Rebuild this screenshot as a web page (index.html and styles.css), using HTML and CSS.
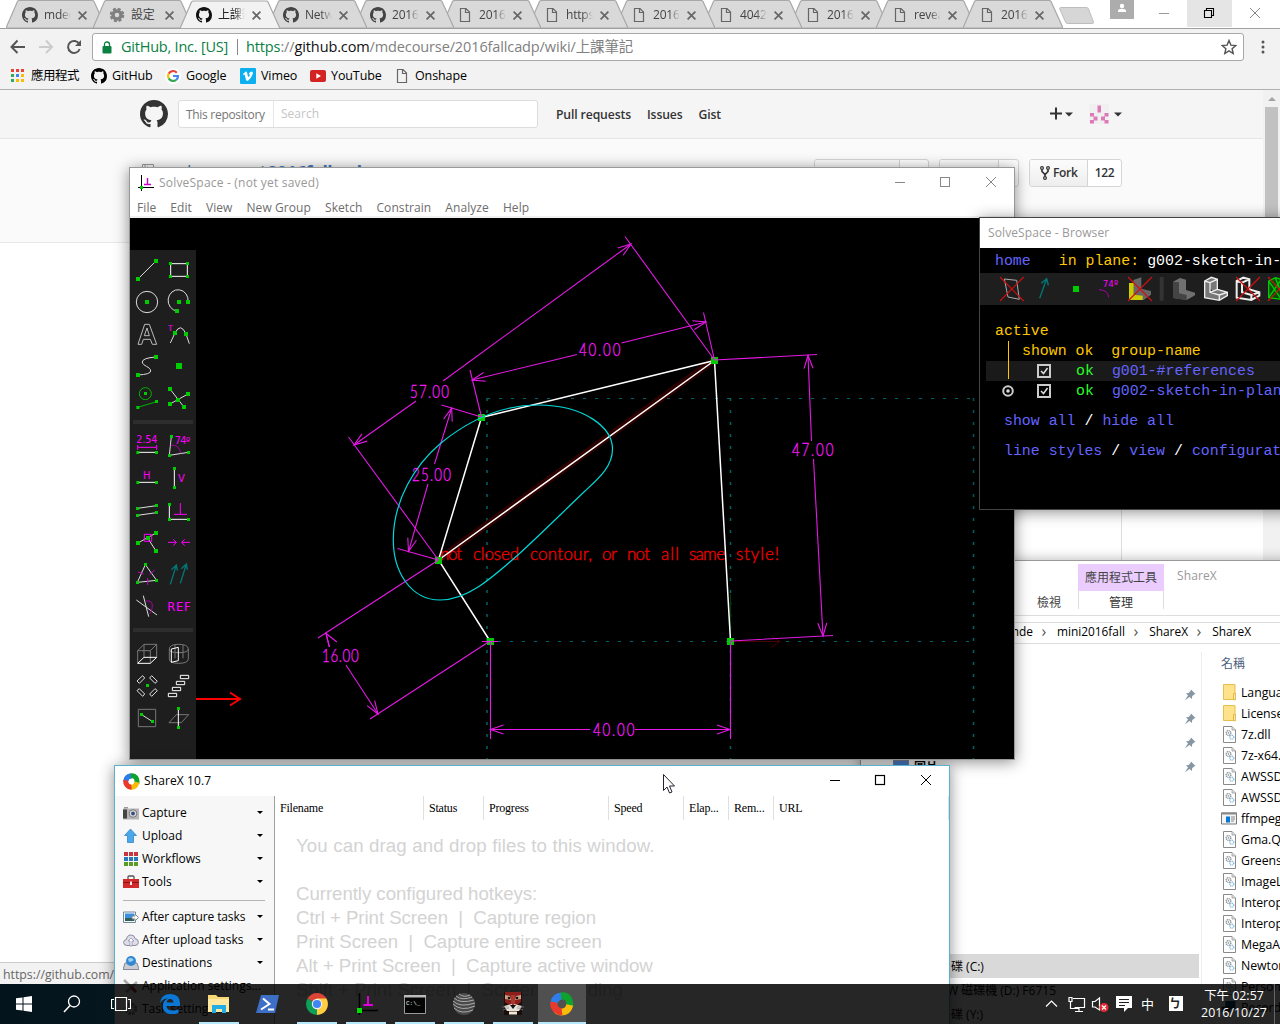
FILE: index.html
```html
<!DOCTYPE html>
<html lang="zh-Hant">
<head>
<meta charset="utf-8">
<title>Desktop</title>
<link rel="stylesheet" href="styles.css">
</head>
<body>
<svg class="defs" aria-hidden="true">
  <defs>
    <symbol id="gh" viewBox="0 0 16 16"><path fill="currentColor" d="M8 0C3.58 0 0 3.58 0 8c0 3.54 2.29 6.53 5.47 7.59.4.07.55-.17.55-.38 0-.19-.01-.82-.01-1.49-2.01.37-2.53-.49-2.69-.94-.09-.23-.48-.94-.82-1.13-.28-.15-.68-.52-.01-.53.63-.01 1.08.58 1.23.82.72 1.21 1.87.87 2.33.66.07-.52.28-.87.51-1.07-1.78-.2-3.64-.89-3.64-3.95 0-.87.31-1.59.82-2.15-.08-.2-.36-1.02.08-2.12 0 0 .67-.21 2.2.82.64-.18 1.32-.27 2-.27.68 0 1.36.09 2 .27 1.53-1.04 2.2-.82 2.2-.82.44 1.1.16 1.92.08 2.12.51.56.82 1.27.82 2.15 0 3.07-1.87 3.75-3.65 3.95.29.25.54.73.54 1.48 0 1.07-.01 1.93-.01 2.2 0 .21.15.46.55.38A8.013 8.013 0 0016 8c0-4.42-3.58-8-8-8z"/></symbol>
    <symbol id="page" viewBox="0 0 16 16"><path d="M3.5 1.5H9L12.5 5V14.5H3.5ZM8.5 1.5V5.5H12.5" fill="none" stroke="#666" stroke-width="1.2"/></symbol>
    <symbol id="gear" viewBox="0 0 16 16"><circle cx="8" cy="8" r="4" fill="none" stroke="#808080" stroke-width="3.4"/><circle cx="8" cy="8" r="6.1" fill="none" stroke="#808080" stroke-width="2.4" stroke-dasharray="2.9 1.89"/></symbol>
    <symbol id="tabshape" viewBox="0 0 100 28"><path d="M0 28 11.5 1.5Q12 .5 13.5 .5H86Q87.5 .5 88 1.5L100 28Z" fill="currentColor" stroke="#a8a8a8" stroke-width="1.2"/></symbol>
    <symbol id="x" viewBox="0 0 8 8"><path d="M.5.5 7.5 7.5M7.5.5.5 7.5" stroke="#666" stroke-width="1.5" fill="none"/></symbol>
    <symbol id="dll" viewBox="0 0 13 17"><path d="M.5.5H9L12.5 4V16.5H.5Z" fill="#fff" stroke="#8a8a8a"/><path d="M9 .5V4H12.5" fill="#ddd" stroke="#999" stroke-width=".8"/><circle cx="5.5" cy="7" r="2.4" fill="none" stroke="#8d9499" stroke-width="1.3" stroke-dasharray="1.2 .5"/><circle cx="5.5" cy="7" r=".9" fill="#9aa"/><circle cx="8.8" cy="11.2" r="2" fill="none" stroke="#8ebedb" stroke-width="1.3" stroke-dasharray="1.2 .5"/></symbol>
    <symbol id="folder" viewBox="0 0 13 17"><path d="M.5 .5H12V15.5H.5Z" fill="#ffe28c" stroke="#e8bf4a"/><path d="M10.5 9.5H12.6V15.8H10.5Z" fill="#ffe9a8" stroke="#dcae35" stroke-width=".8"/></symbol>
    <symbol id="pin" viewBox="0 0 12 12"><path d="M7 .5 11.5 5 10 5.6 8.2 7.3 7.8 10 5.6 8 .8 11.3 4 6.4 2 4.3 4.7 3.9 6.5 2Z" fill="#8796a2"/></symbol>
    <symbol id="sharex" viewBox="0 0 24 24"><g fill="none" stroke-width="7"><path d="M4 12A8 8 0 0 1 12 4.2" stroke="#2f7de8"/><path d="M10 4.500Q15 2.500 18.2 6.500 20.500 10.500 19.500 15" stroke="#0da32d"/><path d="M19.800 13Q18 20 12 20 8 20 6.500 18" stroke="#fbbc05"/><path d="M4 10Q3 15 7 18.200 9.500 20 12 19.700" stroke="#ea3a2c"/><path d="M4.200 10Q5.500 4.500 11 4.200" stroke="#2f7de8"/></g></symbol>
    <marker id="arr" markerUnits="userSpaceOnUse" markerWidth="30" markerHeight="12" refX="0" refY="0" viewBox="-15 -6 30 12" orient="auto-start-reverse"><path d="M-13-4.5 0 0-13 4.5" fill="none" stroke="#e619e6" stroke-width="1.1"/></marker>
  </defs>
</svg>

<main class="desktop">

<section class="chrome">
  <div class="tabstrip">
    <ul class="tabs">
      <li class="tab"><svg class="shape"><use href="#tabshape"/></svg><svg class="fav ghd"><use href="#gh"/></svg><span>mdec</span><svg class="close"><use href="#x"/></svg></li>
      <li class="tab"><svg class="shape"><use href="#tabshape"/></svg><svg class="fav"><use href="#gear"/></svg><span>設定</span><svg class="close"><use href="#x"/></svg></li>
      <li class="tab active"><svg class="shape"><use href="#tabshape"/></svg><svg class="fav"><use href="#gh"/></svg><span>上課筆</span><svg class="close"><use href="#x"/></svg></li>
      <li class="tab"><svg class="shape"><use href="#tabshape"/></svg><svg class="fav ghd"><use href="#gh"/></svg><span>Netw</span><svg class="close"><use href="#x"/></svg></li>
      <li class="tab"><svg class="shape"><use href="#tabshape"/></svg><svg class="fav ghd"><use href="#gh"/></svg><span>2016</span><svg class="close"><use href="#x"/></svg></li>
      <li class="tab"><svg class="shape"><use href="#tabshape"/></svg><svg class="fav"><use href="#page"/></svg><span>2016</span><svg class="close"><use href="#x"/></svg></li>
      <li class="tab"><svg class="shape"><use href="#tabshape"/></svg><svg class="fav"><use href="#page"/></svg><span>https</span><svg class="close"><use href="#x"/></svg></li>
      <li class="tab"><svg class="shape"><use href="#tabshape"/></svg><svg class="fav"><use href="#page"/></svg><span>2016</span><svg class="close"><use href="#x"/></svg></li>
      <li class="tab"><svg class="shape"><use href="#tabshape"/></svg><svg class="fav"><use href="#page"/></svg><span>4042</span><svg class="close"><use href="#x"/></svg></li>
      <li class="tab"><svg class="shape"><use href="#tabshape"/></svg><svg class="fav"><use href="#page"/></svg><span>2016</span><svg class="close"><use href="#x"/></svg></li>
      <li class="tab"><svg class="shape"><use href="#tabshape"/></svg><svg class="fav"><use href="#page"/></svg><span>revea</span><svg class="close"><use href="#x"/></svg></li>
      <li class="tab"><svg class="shape"><use href="#tabshape"/></svg><svg class="fav"><use href="#page"/></svg><span>2016</span><svg class="close"><use href="#x"/></svg></li>
    </ul>
    <svg class="newtab" width="36" height="18"><path d="M1.500 .5H27.5Q29 .5 29.500 2L34.500 15Q34.800 16.500 33.500 16.500H8.500Q7 16.500 6.500 15L.8 2Q.5 .5 1.500 .5Z" fill="#d6d6d6" stroke="#bdbdbd"/></svg>
    <svg class="caption" width="170" height="28"><rect x="0" y="0" width="24" height="19" fill="#acacac"/><circle cx="12" cy="6" r="2.200" fill="#fff"/><path d="M8 12V11Q8 8.700 12 8.700 16 8.700 16 11V12Z" fill="#fff"/><path d="M49 13.500H59" stroke="#999"/><rect x="77" width="45" height="27" fill="#e5e5e5"/><path d="M94.500 10.500H101.500V17.500H94.500ZM96.500 10.500V8.500H103.500V15.500H101.500" fill="none" stroke="#000" stroke-width="1.100"/><path d="M140 8 150 18M150 8 140 18" stroke="#888"/></svg>
  </div>
  <div class="toolbar">
    <svg class="nav" width="84" height="33"><path d="M11.500 18H25M17.500 11.500 11.500 18 17.500 24" fill="none" stroke="#555" stroke-width="2"/><path d="M39 18H52.500M46 11.500 52 18 46 24" fill="none" stroke="#ccc" stroke-width="2"/><path d="M79.300 15A6 6 0 1 0 79.700 20" fill="none" stroke="#555" stroke-width="2"/><path d="M81 11V17H75Z" fill="#555"/></svg>
    <div class="omnibox">
      <svg width="10" height="13"><rect x=".5" y="5" width="9" height="7.500" rx="1" fill="#0b8043"/><path d="M2.500 6V3.500Q2.500 1 5 1 7.500 1 7.500 3.500V6" fill="none" stroke="#0b8043" stroke-width="1.300"/></svg>
      <span class="org">GitHub, Inc. [US]</span><i></i>
      <span class="url"><b>https</b>://<em>github.com</em>/mdecourse/2016fallcadp/wiki/上課筆記</span>
      <svg class="star" width="16" height="16"><path d="M8 1.500 9.900 6.100 14.800 6.500 11.100 9.700 12.200 14.500 8 11.900 3.800 14.500 4.900 9.700 1.200 6.500 6.100 6.100Z" fill="none" stroke="#555" stroke-width="1.400"/></svg>
    </div>
    <svg class="dots" width="4" height="14"><g fill="#555"><circle cx="2" cy="2" r="1.500"/><circle cx="2" cy="7" r="1.500"/><circle cx="2" cy="12" r="1.500"/></g></svg>
  </div>
  <div class="bookmarks">
    <a class="b1"><svg width="14" height="14"><g fill="#ea4335"><path d="M0 0h3v3H0zM5 0h3v3H5zM10 0h3v3h-3z"/></g><g fill="#34a853"><path d="M0 5h3v3H0zM0 10h3v3H0z"/></g><path d="M5 5h3v3H5z" fill="#4285f4"/><path d="M10 5h3v3h-3zM5 10h3v3H5zM10 10h3v3h-3z" fill="#fbbc05"/></svg>應用程式</a>
    <a class="b2"><svg width="16" height="16"><use href="#gh"/></svg>GitHub</a>
    <a class="b3"><svg width="16" height="16"><circle cx="8" cy="8" r="8" fill="#fff"/><g fill="none" stroke-width="2.200"><path d="M11.800 4.700A5 5 0 0 0 3.700 5.600" stroke="#ea4335"/><path d="M3.700 5.600A5 5 0 0 0 3.700 10.400" stroke="#fbbc05"/><path d="M3.700 10.400A5 5 0 0 0 11.200 11.800" stroke="#34a853"/><path d="M8 8H13Q13 10.500 11.200 11.800" stroke="#4285f4"/></g></svg>Google</a>
    <a class="b4"><svg width="16" height="16"><rect width="16" height="16" rx="1" fill="#0cb0f0"/><path d="M3 6 5.800 3.500Q7 3.200 7.300 5.500 7.800 9 8.500 9 9.200 8.800 9.800 7 9.900 6 8.700 6.300 9.500 3.300 11.800 3.400 13.300 3.600 12.800 5.800 11.500 10 8 12.800 6.500 13.300 5.900 11.500L4.500 6.500 3.600 6.900Z" fill="#fff"/></svg>Vimeo</a>
    <a class="b5"><svg width="16" height="12"><rect width="16" height="12" rx="2" fill="#d32323"/><path d="M6.300 3.300V8.700L11 6Z" fill="#fff"/></svg>YouTube</a>
    <a class="b6"><svg width="16" height="16"><use href="#page"/></svg>Onshape</a>
  </div>
  <div class="viewport">
    <div class="page">
      <header class="ghhead">
        <svg class="mark" width="28" height="28"><use href="#gh"/></svg>
        <div class="search"><span>This repository</span><p>Search</p></div>
        <nav><a>Pull requests</a><a>Issues</a><a>Gist</a></nav>
        <svg class="user" width="76" height="24"><path d="M1 11.500H13M7 5.500V17.500" stroke="#333" stroke-width="2"/><path d="M16 10.500H24L20 14.500ZM65 10.500H73L69 14.500Z" fill="#333"/><rect x="40" y="2" width="20" height="20" fill="#f0f0f0"/><path d="M48.500 3.500h3.500v7h-3.500zM41 11h4v3.500h-4zM44.500 14.500h4v4h-4zM41 18h4v3.500h-4zM55.500 11h4v3.500h-4zM52 14.500h4v4h-4zM55.500 18h4v3.500h-4z" fill="#de79b8"/></svg>
      </header>
      <div class="repohead">
        <svg class="book" width="12" height="16"><path d="M.5.500H11.500V15H.5ZM3 .5V12M5 3H6M5 6H6" fill="none" stroke="#999"/></svg>
        <h1>mdecourse / <b>2016fallcadp</b></h1>
        <div class="btns">
          <div class="btn watch"><span>◉ Watch</span><b>8</b></div>
          <div class="btn starb"><span>★ Star</span><b>5</b></div>
          <div class="btn fork"><span><svg width="10" height="16"><g fill="none" stroke="#333" stroke-width="1.200"><circle cx="2" cy="3" r="1.400"/><circle cx="8" cy="3" r="1.400"/><circle cx="5" cy="13" r="1.400"/></g><path d="M2 4.500V6.500L5 9.500 8 6.500V4.500M5 9V11.500" fill="none" stroke="#333" stroke-width="1.700"/></svg>Fork</span><b>122</b></div>
        </div>
      </div>
      <div class="wiki"></div>
    </div>
    <div class="scroll"><i></i><b></b></div>
  </div>
  <div class="status">https://github.com/</div>
</section>

<section class="explorer">
  <div class="extitle"><span class="view">檢視</span><div class="ctx"><span>應用程式工具</span><p>管理</p></div><span class="exname">ShareX</span></div>
  <div class="crumbs"><span>mde</span><i>›</i><span>mini2016fall</span><i>›</i><span>ShareX</span><i>›</i><span>ShareX</span></div>
  <div class="exbody">
    <div class="tree">
      <div class="pins"><svg><use href="#pin"/></svg><svg><use href="#pin"/></svg><svg><use href="#pin"/></svg><svg><use href="#pin"/></svg></div>
      <div class="pics"><svg width="16" height="16"><rect x=".5" y=".5" width="15" height="13" fill="#4d86d8" stroke="#889"/></svg>圖片</div>
      <div class="drive sel">碟 (C:)</div>
      <div class="drive d2">W 磁碟機 (D:) F6715</div>
      <div class="drive">碟 (Y:)</div>
    </div>
    <div class="files">
      <h2>名稱</h2>
      <p><svg><use href="#folder"/></svg>Languages</p>
      <p><svg><use href="#folder"/></svg>Licenses</p>
      <p><svg><use href="#dll"/></svg>7z.dll</p>
      <p><svg><use href="#dll"/></svg>7z-x64.dll</p>
      <p><svg><use href="#dll"/></svg>AWSSDK</p>
      <p><svg><use href="#dll"/></svg>AWSSDK</p>
      <p class="app"><svg viewBox="0 0 16 12"><path d="M.5.5H15.500V11.500H.5Z" fill="#f4f4f4" stroke="#777"/><path d="M0 0H16V2H0Z" fill="#888"/><path d="M5 4H9V10H5Z" fill="#0078d7"/><path d="M10 4.500H14M10 6.500H14M10 8.500H13" stroke="#888"/></svg>ffmpeg</p>
      <p><svg><use href="#dll"/></svg>Gma.QrCode</p>
      <p><svg><use href="#dll"/></svg>Greenshot</p>
      <p><svg><use href="#dll"/></svg>ImageListView</p>
      <p><svg><use href="#dll"/></svg>Interop.</p>
      <p><svg><use href="#dll"/></svg>Interop.</p>
      <p><svg><use href="#dll"/></svg>MegaApi</p>
      <p><svg><use href="#dll"/></svg>Newtonsoft</p>
      <p><svg><use href="#dll"/></svg>Personal</p>
      <p class="app"><svg viewBox="0 0 16 14"><path d="M4 0H15V9H4Z" fill="#0a4a7a"/><path d="M0 6H9V12H0Z" fill="#2b3a44"/></svg><span>Recorder</span></p>
    </div>
  </div>
</section>

<section class="win solve">
  <div class="title"><svg width="17" height="17"><path d="M3.500 0V16M0 12.500H16" stroke="#000"/><path d="M9.500 3V9.500M6 9.500H13" stroke="#c0c" stroke-width="1.400"/><rect x="2" y="11" width="3" height="3" fill="#0c0"/></svg><span>SolveSpace - (not yet saved)</span>
    <svg class="wc" width="110" height="14"><path d="M1 6.500H11M92 1 102 11M102 1 92 11" stroke="#888"/><rect x="46.500" y="1.500" width="9" height="9" fill="none" stroke="#888"/></svg></div>
  <div class="menu"><span>File</span><span>Edit</span><span>View</span><span>New Group</span><span>Sketch</span><span>Constrain</span><span>Analyze</span><span>Help</span></div>
  <svg class="cad" viewBox="130 218 884 541">
    <rect x="130" y="218" width="884" height="541" fill="#000"/>
    <g fill="none" stroke="#006464" stroke-dasharray="3 9" stroke-width="1.200"><path d="M487 398.500H974M498 641.500H974"/><path d="M487 398V759M730.500 398V759M973.500 398V759" stroke-width="1.500"/></g>
    <path d="M438 560 714 360" stroke="#2e0000" stroke-width="7"/>
    <path d="M730.500 594V641" stroke="#003c00"/><path d="M731 641.500H780M771 635.500 780 641.500 771 647.500" stroke="#4b0000" fill="none"/>
    <g class="warn">
      <text y="559.500"><tspan x="440" textLength="22">not</tspan><tspan x="473" textLength="46">closed</tspan><tspan x="530" textLength="62">contour,</tspan><tspan x="602" textLength="15">or</tspan><tspan x="627" textLength="23">not</tspan><tspan x="661" textLength="18">all</tspan><tspan x="689" textLength="36">same</tspan><tspan x="736" textLength="43">style!</tspan></text>
    </g>
    <g stroke="#fff" stroke-width="1.500" fill="none"><path d="M490 641 438.500 560 481.500 417.500 714.500 360.500 730.500 641M438.500 560 714.500 360.500"/></g>
    <g fill="#0c0"><path d="M487 638h7v7h-7zM435 557h7v7h-7zM478 414h7v7h-7zM711 357h7v7h-7zM727 638h7v7h-7z"/></g>
    <g stroke="#e619e6" stroke-width="1.100" fill="none">
      <path d="M714.500 360 625 236.500M438.500 560 348.500 437M714.500 360 703.500 312.500M481.500 417 470 370M481.500 417 441.500 405M438.500 560 397.500 548.500M438.500 560 318 638M490 641 370 719M490.500 641V739M730.500 641V739M482 641.500H498M714.500 360 817 354.500M730.500 641 833 635.500"/>
      <g marker-end="url(#arr)">
        <path d="M443 381 631 244"/><path d="M416 401 354 445"/>
        <path d="M621.500 343 706 322"/><path d="M577 354.500 472 380"/>
        <path d="M434.500 464 451.700 408"/><path d="M428 484 408.500 551.500"/>
        <path d="M329.500 647 326 633.500" marker-end="none"/><path d="M336 649 326 633.500" stroke="none"/><path d="M346 665 378 714"/>
        <path d="M590 729.500H490.500"/><path d="M635 729.500H730"/>
        <path d="M811.500 441 808 355.500"/><path d="M813.500 459 823 636"/>
      </g>
    </g>
    <path d="M538 405C585 405 612.500 428 612.500 449 612.500 467 598 479 585 491 562 513 542 533 519 554 493 577 468 600 440 600 411 600 393.300 572 393.300 540 393.300 500 415 465 441 443 468 421 500 405 538 405Z" fill="none" stroke="#00d8d8" stroke-width="1.200"/>
    <g class="dims">
      <text transform="translate(579 355.500) scale(.78 1)" textLength="53">40.00</text>
      <text transform="translate(410 398) scale(.78 1)" textLength="50">57.00</text>
      <text transform="translate(412 481) scale(.78 1)" textLength="50">25.00</text>
      <text transform="translate(322 662) scale(.78 1)" textLength="47">16.00</text>
      <text transform="translate(593 736) scale(.78 1)" textLength="53">40.00</text>
      <text transform="translate(792 456) scale(.78 1)" textLength="53">47.00</text>
    </g>
    <rect x="130" y="250" width="66" height="509" fill="#1e1e1e"/>
    <path d="M196 699H239M230 692.500 240 699 230 705.500" fill="none" stroke="red" stroke-width="2"/>
    <g transform="translate(125 240) scale(.33333)" fill="none" stroke="#ddd" stroke-width="3">
      <path d="M39 117 93 63"/><path d="M137 71H187V109H137Z" stroke="#fff"/><circle cx="66" cy="186" r="32"/><path d="M189 186A30 32 0 1 0 156 213"/>
      <path d="M39 313 59 253H73L95 313H82L76 298H55L50 313ZM58 287H73L66 264Z" stroke="#bbb" stroke-width="3"/><path d="M136 309 150 279Q167 246 183 282L193 311"/>
      <path d="M39 405Q77 403 77 393C77 380 52 378 52 366Q52 354 93 351"/><path d="M135 447 177 501M135 492 189 462"/>
      <g stroke="#00b400"><circle cx="61" cy="461" r="18"/><path d="M38 502 95 485"/></g>
      <path d="M37 637H95M37 727H95M148 685V743" stroke="#fff"/><path d="M139 589 133 646 190 637"/>
      <g stroke="#f0f"><path d="M38 615V630M95 615V630M38 622H95"/><path d="M137 616Q163 612 167 640" stroke="#a0a"/></g>
      <g fill="#f0f" stroke="none" font-family="DejaVu Sans" font-size="29"><text x="34" y="609" textLength="63">2.54</text><text x="149" y="611" textLength="47">74º</text><text x="54" y="718" font-size="30">H</text><text x="159" y="725" font-size="30">V</text><text x="129" y="272" font-size="24">T</text></g>
      <path d="M24 546H204" stroke="#2d2d2d" stroke-width="12"/>
      <g fill="#0c0" stroke="none"><path d="M33 111h12v12H33zM87 57h12v12H87zM132 66h9v9h-9zM183 66h9v9h-9zM132 105h9v9h-9zM183 105h9v9h-9zM60 180h12v12H60zM156 180h12v12h-12zM183 180h12v12h-12zM150 207h12v12h-12zM144 273h12v12h-12zM177 276h12v12h-12zM33 399h12v12H33zM87 345h12v12H87zM153 369h18v18h-18zM57 456h9v9h-9zM34 498h9v9h-9zM90 480h9v9h-9zM129 441h12v12h-12zM183 456h12v12h-12zM129 486h12v12h-12zM171 495h12v12h-12zM153 474h12v12h-12zM34 633h9v9h-9zM90 633h9v9h-9zM135 585h9v9h-9zM129 642h9v9h-9zM186 633h9v9h-9zM34 723h9v9h-9zM90 723h9v9h-9zM144 681h9v9h-9zM144 738h9v9h-9z"/></g>
    </g>
    <g transform="translate(125 490) scale(.33333)" fill="none" stroke="#ddd" stroke-width="3">
      <path d="M37 55 95 47M37 76 95 68"/><path d="M133 43V88H190" stroke="#fff"/><path d="M166 39V73M147 73H186" stroke="#f0f"/>
      <path d="M39 159 93 129M68 144 93 183"/><path d="M58 133H80V154H58Z" stroke="#f0f"/>
      <path d="M129 157H154M145 148 154 157 145 167M195 157H170M179 148 170 157 179 167" stroke="#f0f"/>
      <path d="M61 224 37 277 95 271Z"/><path d="M39 246 56 252M74 254 89 240M68 264V285" stroke="#c0c"/>
      <path d="M136 283 154 225M139 239 154 225 157 242M166 280 184 222M169 236 184 222 187 239" stroke="#007878" stroke-width="4"/>
      <path d="M34 330 96 375M55 317 71 380"/><path d="M62 333Q83 330 82 349T74 371" stroke="#a0a"/>
      <text x="127" y="362" font-family="DejaVu Sans" font-size="35" fill="#f0f" stroke="none" textLength="70">REF</text>
      <path d="M24 420H204" stroke="#2d2d2d" stroke-width="12"/>
      <g stroke="#777"><path d="M38 482 57 463H95V502M38 482H76V520M76 482 95 463M57 463V502M38 482V520"/><path d="M133 477V507Q133 520 161 520T190 507V477M133 477Q133 463 161 463T190 477Q190 488 161 488T133 477M150 463V505M174 465V505"/></g>
      <path d="M38 520H76L95 502H57ZM139 477V517L160 512V472Z" stroke="#fff"/>
      <path d="M36 573 53 557 59 564 43 580ZM74 564 80 557 97 574 90 580ZM36 602 43 596 59 612 53 619ZM74 612 90 596 97 602 80 619Z"/>
      <path d="M166 556H191V566H166ZM154 574H179V584H154ZM142 592H167V602H142ZM130 610H155V620H130Z" stroke="#fff"/>
      <path d="M40 658H92V710H40ZM132 698 154 674H191L169 698Z" stroke="#777"/><path d="M50 674 83 695"/><path d="M160 655V712" stroke="#fff"/>
      <g fill="#0c0" stroke="none"><path d="M33 51h9v9h-9zM90 42h9v9h-9zM33 72h9v9h-9zM90 63h9v9h-9zM129 39h9v9h-9zM129 84h9v9h-9zM186 84h9v9h-9zM33 153h12v12H33zM87 123h12v12H87zM63 138h12v12H63zM87 177h12v12H87zM57 219h9v9h-9zM33 273h9v9h-9zM90 267h9v9h-9zM63 582h9v9h-9zM45 669h9v9h-9zM78 690h9v9h-9zM156 651h9v9h-9zM156 708h9v9h-9z"/></g>
    </g>
  </svg>
</section>

<section class="win browser">
  <div class="btitle">SolveSpace - Browser</div>
  <div class="mono">
    <div class="brow home"><a>home</a><em>in plane:</em><b>g002-sketch-in-plane</b></div>
    <svg class="bicons" viewBox="30 189 900 96" width="300" height="32"><g fill="none" stroke-width="3">
      <path d="M103 207 140 211 148 268 114 261Z" stroke="#aaa"/>
      <path d="M209 265 230 206M214 220 230 206 235 226" stroke="#007878" stroke-width="4"/><path d="M309 228H327V246H309Z" fill="#0c0"/><path d="M387 239Q415 240 416 262" stroke="#a0a"/>
      <path d="M490 210 514 202V236L543 243V254L521 270 490 265Z" fill="#666"/><path d="M477 219H491V254L518 257V270H477Z" fill="#cc0"/>
      <path d="M575 201V272" stroke="#333" stroke-width="12"/>
      <path d="M609 215 630 204 648 209V240L675 248V256L650 270 609 264Z" fill="#707070"/><path d="M609 215 627 217V250L650 255V270L609 264Z" fill="#444"/>
      <g fill="#777" stroke="#eee" stroke-width="4"><path d="M704 213 724 202 742 208V238L772 247V257L748 271 704 263ZM704 213 720 218V247L748 255V271M720 218 742 208M748 255 772 247M720 247 742 238"/><path fill="none" stroke-width="6" d="M800 213 820 203 838 208V238L868 247V257L844 270 800 263ZM800 213 816 218V247L844 255V270M816 218 838 208M844 255 868 247"/></g>
      <path d="M896 213 916 203 934 208V268L896 263ZM896 213 934 268M916 203 934 250M896 263 934 208" fill="#064d06" stroke="#0c0" stroke-width="4"/>
      <path d="M90 201 161 273M161 201 90 273M474 201 546 273M546 201 474 273M798 201 870 273M870 201 798 273M894 201 940 250M894 273 940 225" stroke="#d01010" stroke-width="3.500"/></g>
      <text x="398" y="231" font-family="DejaVu Sans" font-size="26" textLength="46" fill="#f0f">74º</text></svg>
    <div class="brow act"><em>active</em></div>
    <div class="brow head"><em>shown ok&nbsp; group-name</em></div>
    <div class="brow g g1"><svg width="14" height="14"><path d="M1 1H13V13H1Z" fill="none" stroke="#ccc" stroke-width="2"/><path d="M4 7 6.500 9.500 10.500 4" fill="none" stroke="#ddd" stroke-width="1.500"/></svg><i>ok</i><a>g001-#references</a></div>
    <div class="brow g g2"><svg class="radio" width="12" height="12"><circle cx="6" cy="6" r="4.800" fill="none" stroke="#ccc" stroke-width="2"/><circle cx="6" cy="6" r="1.800" fill="#ddd"/></svg><svg width="14" height="14"><path d="M1 1H13V13H1Z" fill="none" stroke="#ccc" stroke-width="2"/><path d="M4 7 6.500 9.500 10.500 4" fill="none" stroke="#ddd" stroke-width="1.500"/></svg><i>ok</i><a>g002-sketch-in-plane</a></div>
    <div class="brow links"><a>show all</a> <b>/</b> <a>hide all</a></div>
    <div class="brow links"><a>line styles</a> <b>/</b> <a>view</a> <b>/</b> <a>configuration</a></div>
  </div>
</section>

<section class="win share">
  <div class="title"><svg width="17" height="17"><use href="#sharex"/></svg><span>ShareX 10.7</span>
    <svg class="wc" width="110" height="14"><path d="M1 6.500H11M92 1 102 11M102 1 92 11" stroke="#000"/><rect x="46.500" y="1.500" width="9" height="9" fill="none" stroke="#000" stroke-width="1.200"/></svg></div>
  <div class="sbody">
    <div class="side">
      <p><svg viewBox="0 0 16 14"><path d="M0 2.500H16V13.500H0Z" fill="#b5b5b9"/><path d="M0 3.500H4V12.500H0Z" fill="#444"/><path d="M1 1H5V2.500H1Z" fill="#999"/><circle cx="10" cy="7.500" r="3.800" fill="#ddd" stroke="#777"/><circle cx="10" cy="7.500" r="2" fill="#3b4f85"/></svg><span>Capture</span><i></i></p>
      <p><svg viewBox="0 0 16 14"><path d="M7.500 0 13.500 6.500H10.500V13.500H4.500V6.500H1.500Z" fill="#4aa7ea" stroke="#2a7bc0" stroke-width=".7"/></svg><span>Upload</span><i></i></p>
      <p><svg viewBox="0 0 16 14"><path d="M1 0h4v4H1zM6 0h4v4H6zM11 0h4v4h-4z" fill="#c8353d"/><path d="M1 5h4v4H1zM6 5h4v4H6zM11 5h4v4h-4z" fill="#2879b9"/><path d="M1 10h4v4H1zM6 10h4v4H6zM11 10h4v4h-4z" fill="#5b9c26"/></svg><span>Workflows</span><i></i></p>
      <p><svg viewBox="0 0 16 14"><path d="M5 4V2Q5 1 6 1H10Q11 1 11 2V4" fill="none" stroke="#555" stroke-width="1.300"/><path d="M0 4H16V13H0Z" fill="#d02a2a"/><path d="M0 7.500H16" stroke="#8f1111"/><path d="M7 6.500H9V10H7Z" fill="#eee"/></svg><span>Tools</span><i></i></p>
      <hr>
      <p><svg viewBox="0 0 16 14"><path d="M.5 2H12.500V12.500H.5Z" fill="#eef6ff" stroke="#789"/><path d="M2 3.500H11V8H2Z" fill="#3c8ede"/><path d="M2 8H11V11H2Z" fill="#345e55"/><path d="M9 6H12V4L15.500 7.500 12 11V9H9Z" fill="#fff" stroke="#788"/></svg><span>After capture tasks</span><i></i></p>
      <p><svg viewBox="0 0 16 14"><path d="M4 12.500Q.5 12.500 .6 9.300 1 6.500 3.500 6.500 4 2 8 2 11.500 2 12 5.500 15.500 6 15.400 9.500 15 12.500 12 12.500Z" fill="#dedee8" stroke="#8a8aa0"/><path d="M8 5 11 8H9V13H7V8H5Z" fill="#fff" stroke="#88a" stroke-width=".7"/></svg><span>After upload tasks</span><i></i></p>
      <p><svg viewBox="0 0 16 14"><path d="M2 7H14L16 13.500H0Z" fill="#c9cdd2" stroke="#889"/><circle cx="8" cy="5" r="5" fill="#3488cf"/><path d="M5 3Q8 1 10 3T6 6" fill="#9ad0f5"/></svg><span>Destinations</span><i></i></p>
      <p><svg viewBox="0 0 16 14"><path d="M1 1 13 13M3 13 14 3" stroke="#aaa" stroke-width="2.500"/><path d="M8 8 13 13" stroke="#b33" stroke-width="3"/></svg><span>Application settings...</span></p>
      <p><svg viewBox="0 0 16 14"><circle cx="8" cy="7" r="4.500" fill="none" stroke="#888" stroke-width="3.500" stroke-dasharray="2.500 1"/></svg><span>Task settings...</span></p>
    </div>
    <div class="list">
      <div class="cols"><span>Filename</span><span>Status</span><span>Progress</span><span>Speed</span><span>Elap...</span><span>Rem...</span><span>URL</span></div>
      <div class="hint"><p>You can drag and drop files to this window.</p><br>Currently configured hotkeys:<br>Ctrl + Print Screen&nbsp; |&nbsp; Capture region<br>Print Screen&nbsp; |&nbsp; Capture entire screen<br>Alt + Print Screen&nbsp; |&nbsp; Capture active window<br>Shift + Print Screen&nbsp; |&nbsp; Screen recording</div>
    </div>
  </div>
</section>

<footer class="taskbar">
  <div class="t s"><svg width="16" height="16"><path d="M0 2.300 6.500 1.400V7.500H0ZM7.500 1.200 16 0V7.500H7.500ZM0 8.500H6.500V14.600L0 13.700ZM7.500 8.500H16V16L7.500 14.800Z" fill="#fff"/></svg></div>
  <div class="t s"><svg width="18" height="18"><circle cx="11" cy="6.500" r="5.500" fill="none" stroke="#fff" stroke-width="1.300"/><path d="M7 10.500 1 17" stroke="#fff" stroke-width="1.500"/></svg></div>
  <div class="t s"><svg width="20" height="16"><path d="M4.500 1.500H15.500V14.500H4.500ZM3 3.500H.5V12.500H3M17 3.500H19.500V12.500H17" fill="none" stroke="#fff" stroke-width="1.200"/></svg></div>
  <div class="t"><svg width="20" height="20" viewBox="0 0 20 20"><path d="M0 9Q1 0 10.500 0 20 .5 20 9V12H6.500Q7 16.500 12.500 16.500 16 16.500 18.500 15V19Q15 20.500 11 20.300 3 19.500 2.700 12.500 2.700 7 8 4.300 3 4.600 0 9ZM6.700 8.500H13.500Q13.300 5 10 5 7 5.300 6.700 8.500Z" fill="#0b78d7"/></svg></div>
  <div class="t run"><svg width="22" height="20"><path d="M0 1H8L10 3H21V18H0Z" fill="#f8d775"/><path d="M0 5H21V18H0Z" fill="#ffe9a0"/><path d="M4 19V11H18V19H14V15H8V19Z" fill="#22aee5"/></svg></div>
  <div class="t"><svg width="24" height="20"><path d="M5 1H23L19 19H0Z" fill="#3c6fc5"/><path d="M7 4.500 13.500 10 5 15.500M12 15.500H18" fill="none" stroke="#fff" stroke-width="2"/></svg></div>
  <div class="t run"><svg width="22" height="22" viewBox="0 0 22 22"><path d="M11 11 1.500 5.500A11 11 0 0 1 20.500 5.500Z" fill="#db4437"/><path d="M11 11 1.500 5.500A11 11 0 0 0 11 22L16 13Z" fill="#0f9d58"/><path d="M11 11V5.500H20.500A11 11 0 0 1 11 22Z" fill="#ffcd40"/><circle cx="11" cy="11" r="5.200" fill="#f1f1f1"/><circle cx="11" cy="11" r="4.100" fill="#4285f4"/></svg></div>
  <div class="t run"><svg width="24" height="24"><path d="M5.500 1V23M2 18.500H24" stroke="#000" stroke-width="1.500"/><path d="M14 4V12.500M9.500 13H19" stroke="#d0d" stroke-width="2"/><rect x="3" y="16" width="5" height="5" fill="#0d0"/></svg></div>
  <div class="t run"><svg width="22" height="19"><path d="M.5.500H21.500V18.500H.5Z" fill="#050505" stroke="#999"/><path d="M0 0H22V2.500H0Z" fill="#bbb"/><text x="2" y="9.500" fill="#eee" font-family="Liberation Mono" font-size="6">C:\_</text></svg></div>
  <div class="t run"><svg width="24" height="24"><circle cx="12" cy="12" r="11" fill="#4a4a4a"/><g fill="none" stroke="#aaa" stroke-width="1"><path d="M2 6Q8 12 22 8M1 9Q8 16 23 11M1 12Q9 20 23 14M2 16Q9 23 21 18M4 4Q10 9 20 5M7 2Q12 6 18 3"/></g></svg></div>
  <div class="t run"><svg width="24" height="24"><path d="M3 0H21V23H3Z" fill="#1a0d0b"/><path d="M4 0H20V10L16 13H8L4 10Z" fill="#8c1f1c"/><path d="M4 3 9 4 10 8 4 7ZM20 3 15 4 14 8 20 7Z" fill="#c9a080"/><path d="M10 3H14V12H10Z" fill="#a83a30"/><circle cx="8" cy="6" r="1.300" fill="#111"/><circle cx="16" cy="6" r="1.300" fill="#111"/><path d="M3 14 11 12 12 15 13 12 21 14 18 19 6 19Z" fill="#e8e2d8"/><path d="M9 13H15L12 17Z" fill="#111"/><path d="M1 15 8 15M16 15H23M2 18 8 16M22 18 16 16" stroke="#888" stroke-width=".6"/><path d="M8 19.500H16V22.500H8Z" fill="#f3e7d4"/></svg></div>
  <div class="t run on"><svg width="24" height="24"><use href="#sharex"/></svg></div>
  <div class="tray">
    <svg width="136" height="40"><g fill="none" stroke="#fff" stroke-width="1.200"><path d="M1 22.500 6.500 17 12 22.500"/><path d="M24 13.500H27V17.500H24ZM28 14.500H39.500V23.500H29.500M25.500 18V24.500H34M34 24V27M30 27.500H38"/><path d="M47.500 17.500H50L54.500 14V26L50 23H47.500Z"/></g><circle cx="59" cy="23.500" r="4.500" fill="#e22b35"/><path d="M57 21.500 61 25.500M61 21.500 57 25.500" stroke="#fff" stroke-width="1.200"/><path d="M71 12H87V24H83L79 28V24H71Z" fill="#fff"/><path d="M74 15.500H84M74 18.500H84M74 21.500H80" stroke="#222"/><rect x="124" y="12" width="14" height="15" fill="#fff"/></svg>
    <span class="ime">中</span><span class="bopo">ㄅ</span>
    <div class="clock">下午 02:57<br>2016/10/27</div><i></i>
  </div>
</footer>

<svg class="cursor" width="13" height="20"><path d="M.5.500V16.500L4 13 6.500 19 9 18 6.500 12H11.500Z" fill="#fff" stroke="#223" stroke-width="1"/></svg>
</main>
</body>
</html>
```
FILE: styles.css
```css
* { box-sizing: border-box; }
body { margin: 0; font: 12px/16px "Open Sans", "Noto Sans CJK TC", sans-serif; color: #000; }
p, h1, h2, ul { margin: 0; padding: 0; font-weight: normal; }
em, i { font-style: normal; }
svg { display: block; flex: none; }
span, a, p { white-space: nowrap; }
.defs { position: absolute; width: 0; height: 0; }
.desktop { position: relative; width: 1280px; height: 1024px; overflow: hidden; background: #fff; }

/* browser */
.chrome { position: absolute; inset: 0; display: flex; flex-direction: column; background: #f2f2f2; }
.tabstrip { height: 29px; display: flex; background: #fff; border-bottom: 1px solid #a0a0a0; flex: none; }
.tabs { display: flex; list-style: none; padding-left: 6px; width: 1058px; flex: none; }
.tab { position: relative; width: 87px; height: 28px; flex: none; display: flex; align-items: center; padding: 2px 0 0 16px; color: #444; }
.tab:nth-child(-n+12) { z-index: 1; }
.tab:nth-child(-n+9) { z-index: 2; }
.tab:nth-child(-n+8) { z-index: 3; }
.tab:nth-child(-n+7) { z-index: 4; }
.tab:nth-child(-n+6) { z-index: 5; }
.tab:nth-child(-n+5) { z-index: 6; }
.tab:nth-child(-n+4) { z-index: 7; }
.tab:nth-child(-n+2) { z-index: 8; }
.tab.active { z-index: 9; color: #222; }
.shape { position: absolute; left: 0; top: 0; width: 100px; height: 28px; z-index: -1; color: #d9d9d9; }
.active .shape { color: #f2f2f2; height: 29px; }
.fav { width: 16px; height: 16px; }
.active .fav { color: #111; }
.ghd { color: #444; }
.tab span { width: 27px; margin-left: 6px; overflow: hidden; font-size: 12px; letter-spacing: -.2px; -webkit-mask-image: linear-gradient(90deg, #000 60%, transparent 100%); mask-image: linear-gradient(90deg, #000 60%, transparent 100%); }
.tab:nth-child(2) span { -webkit-mask-image: none; mask-image: none; }
.close { width: 9px; height: 9px; margin-left: 7px; }
.newtab { margin: 7px 0 0 1px; }
.caption { margin-left: auto; }
.toolbar { display: flex; height: 32px; padding: 4px 0 0; flex: none; align-items: flex-start; }
.nav { margin: -4px 8px 0 0; }
.omnibox { width: 1152px; height: 28px; background: #fff; border: 1px solid #a8a8a8; border-radius: 3px; display: flex; align-items: center; padding-left: 9px; font-size: 14.500px; line-height: 20px; }
.org { color: #0b8043; margin-left: 9px; width: 108px; letter-spacing: -.22px; }
.omnibox i { width: 1px; height: 16px; background: #888; margin: 0 8px 0 8px; }
.url { color: #808080; letter-spacing: -.12px; }
.url b { font-weight: 400; color: #0b8043; }
.url em { color: #111; }
.star { margin: 0 6px 0 auto; }
.dots { margin: 7px 0 0 17px; }
.bookmarks { height: 29px; flex: none; border-bottom: 1px solid #b0b0b0; display: flex; padding-left: 11px; font-size: 12.500px; letter-spacing: -.1px; }
.bookmarks a { display: flex; align-items: center; height: 28px; padding-top: 1px; flex: none; }
.bookmarks svg { margin-right: 5px; }
.b1 { width: 80px; letter-spacing: -.5px; } .b1 svg { margin-right: 6px; } .b2 { width: 74px; } .b3 { width: 75px; } .b4 { width: 70px; } .b5 { width: 84px; }
.viewport { flex: 1; display: flex; background: #fff; }
.page { flex: 1; display: flex; flex-direction: column; }
.ghhead { height: 49px; background: #f5f5f5; border-bottom: 1px solid #e5e5e5; display: flex; align-items: center; padding-left: 140px; color: #333; flex: none; }
.mark { margin-right: 10px; }
.search { width: 360px; height: 28px; background: #fff; border: 1px solid #ddd; border-radius: 3px; display: flex; align-items: center; }
.search span { width: 95px; padding-left: 7px; height: 26px; line-height: 28px; border-right: 1px solid #e6e6e6; color: #767676; letter-spacing: -.3px; }
.search p { padding-left: 7px; color: #c4c4c4; }
.ghhead nav { display: flex; gap: 16px; margin-left: 18px; font: 600 12.200px "Open Sans"; letter-spacing: -.12px; }
.user { margin-left: auto; margin-right: 138px; }
.repohead { height: 104px; background: #fafafa; border-bottom: 1px solid #e8e8e8; padding: 20px 141px 0 142px; display: flex; align-items: flex-start; flex: none; }
.book { margin-top: 5px; }
.repohead h1 { font-size: 17.500px; line-height: 26px; color: #4078c0; margin: 0 auto 0 11px; letter-spacing: -.4px; }
.btns { display: flex; gap: 10px; }
.btn { display: flex; height: 28px; border: 1px solid #d5d5d5; border-radius: 3px; background: #fff; font: 600 12px/26px "Open Sans"; color: #333; overflow: hidden; }
.btn span { display: flex; gap: 3px; align-items: center; padding-left: 10px; background: linear-gradient(#fcfcfc, #eee); border-right: 1px solid #d5d5d5; letter-spacing: -.3px; }
.btn b { flex: 1; text-align: center; font-weight: 600; letter-spacing: -.4px; }
.watch { width: 115px; } .watch span { width: 85px; }
.starb { width: 80px; } .starb span { width: 59px; }
.fork { width: 93px; } .fork span { width: 58px; }
.wiki { flex: 1; margin-right: 141px; border-right: 1px solid #ddd; }
.scroll { width: 17px; background: #f1f1f1; display: flex; flex-direction: column; align-items: center; }
.scroll i { border: 4px solid transparent; border-bottom-color: #a3a3a3; border-top: 0; margin: 7px 0 6px; }
.scroll b { width: 13px; height: 360px; background: #c1c1c1; }
.status { position: absolute; left: 0; top: 962px; width: 150px; height: 24px; background: #f2f2f2; border-top: 1px solid #ccc; padding: 3px; color: #666; line-height: 17px; font-size: 12.300px; }

/* file explorer */
.explorer { position: absolute; left: 860px; top: 560px; width: 440px; height: 480px; background: #fff; border: 1px solid #999; box-shadow: 0 0 12px rgba(0,0,0,.3); display: flex; flex-direction: column; }
.extitle { display: flex; height: 55px; border-bottom: 1px solid #ddd; flex: none; }
.view { margin: 34px 0 0 176px; width: 41px; color: #444; }
.ctx { width: 86px; margin-top: 3px; text-align: center; }
.ctx span { display: block; height: 27px; line-height: 27px; background: #eaccff; color: #444; }
.ctx p { height: 18px; line-height: 24px; border: 1px solid #ddd; border-width: 0 1px; color: #333; }
.exname { margin: 7px 0 0 13px; color: #999; letter-spacing: .1px; }
.crumbs { display: flex; align-items: center; height: 22px; margin-top: 6px; border: 1px solid #ddd; border-width: 1px 0; padding-left: 149px; flex: none; font-size: 11.900px; }
.crumbs span { width: 23px; margin-bottom: 4px; display: flex; justify-content: flex-end; }
.crumbs i { width: 22px; text-align: center; font-size: 16px; color: #555; line-height: 14px; margin-bottom: 5px; }
.crumbs span:nth-child(3) { width: 70px; } .crumbs span:nth-child(5), .crumbs span:nth-child(7) { width: 41px; }
.exbody { display: flex; margin-top: 8px; }
.tree { width: 341px; flex: none; border-right: 1px solid #eee; display: flex; flex-direction: column; }
.pins { display: flex; flex-direction: column; gap: 12px; align-items: flex-end; padding: 37px 5px 0 0; height: 108px; }
.pins svg { width: 12px; height: 12px; }
.pics { display: flex; gap: 5px; padding-left: 32px; height: 24px; margin-bottom: 170px; font-weight: 600; }
.drive { height: 24px; padding-left: 90px; line-height: 25px; margin-right: 2px; }
.drive.sel { background: #d9d9d9; }
.d2 { padding-left: 86px; }
.files { padding-left: 20px; }
.files h2 { font-size: 12px; line-height: 16px; color: #4c607a; margin: 4px 0 10px -1px; }
.files p { height: 21px; display: flex; align-items: center; gap: 5px; font-size: 12.300px; letter-spacing: -.05px; padding-left: 1px; }
.files svg { width: 13px; height: 17px; }
.files .app { margin-left: -1px; gap: 4px; }
.files .app svg { width: 16px; height: 13px; margin-left: -1px; }

/* windows */
.win { position: absolute; background: #fff; display: flex; flex-direction: column; box-shadow: 0 2px 14px rgba(0,0,0,.45); }
.title { display: flex; align-items: center; height: 30px; flex: none; }
.wc { margin-left: auto; }
.solve { left: 129px; top: 167px; width: 886px; height: 593px; border: 1px solid #999; }
.solve .title { padding-left: 8px; color: #999; }
.solve .title span { margin-left: 4px; letter-spacing: .2px; }
.solve .wc { margin-right: 10px; }
.menu { height: 20px; display: flex; gap: 14px; padding: 1px 0 0 7px; color: #6d6d6d; letter-spacing: .08px; line-height: 18px; flex: none; border-bottom: 2px solid #f0f0f0; }
.cad { width: 884px; height: 541px; }
.warn { font: 300 17px "Lato", sans-serif; fill: #f00000; stroke: #f00000; stroke-width: .35px; }
.dims { font: 300 17px "Lato", sans-serif; fill: #ff19ff; stroke: #ff19ff; stroke-width: .3px; }
.browser { left: 979px; top: 217px; width: 330px; height: 293px; border: 1px solid #444; background: #000; }
.btitle { height: 30px; background: #fff; color: #999; padding: 7px 8px 0; letter-spacing: .1px; }
.mono { font: 14.900px/20px "Liberation Mono", monospace; color: #fff; white-space: pre; display: flex; flex-direction: column; }
.mono a { color: #6464ff; } .mono em { color: #ffc800; } .mono b { font-weight: 400; } .mono i { color: #28ff28; }
.brow { display: flex; height: 20px; padding-left: 15px; }
.home { height: 25px; padding-top: 3px; }
.home em { margin: 0 8px 0 28px; }
.bicons { background: #1e1e1e; }
.act { margin-top: 16px; }
.g { align-items: center; margin-left: 6px; padding-left: 51px; }
.g1 { background: linear-gradient(#ffc800, #ffc800) 22px 0 / 1px 18px no-repeat #1a1a1a; }
.head { margin-left: 13px; padding-left: 29px; background: linear-gradient(#ffc800, #ffc800) 15px 0 / 1px 20px no-repeat; }
.g2 { padding-left: 16px; } .g2 .radio { margin-right: 23px; }
.g i { margin: 0 18px 0 25px; }
.links { margin-top: 10px; padding-left: 24px; gap: 9px; }

.share { left: 114px; top: 765px; width: 836px; height: 265px; border: 1px solid #5ab0cf; }
.share .title { padding-left: 8px; }
.share .title span { margin-left: 4px; letter-spacing: .1px; }
.share .wc { margin-right: 10px; }
.sbody { display: flex; flex: 1; }
.side { width: 160px; background: #f7f7f7; border-right: 1px solid #a0a0a0; padding: 5px 9px 0 8px; flex: none; }
.side p { height: 23px; display: flex; align-items: center; }
.side p:nth-child(6) span { letter-spacing: -.12px; }
.side svg { width: 16px; height: 14px; margin-right: 3px; }
.side i { margin-left: auto; margin-right: 2px; border: 3px solid transparent; border-top-color: #000; border-bottom: 0; }
.side hr { margin: 7px 0 4px; border: 0; border-top: 1px solid #b5b5b5; }
.cols { display: flex; height: 24px; font: 12px/24px "Liberation Serif", serif; letter-spacing: -.2px; }
.cols span { padding-left: 5px; border-right: 1px solid #e0e0e0; width: 75px; }
.cols span:nth-child(1) { width: 149px; } .cols span:nth-child(2) { width: 60px; } .cols span:nth-child(3) { width: 125px; }
.cols span:nth-child(5), .cols span:nth-child(6) { width: 45px; } .cols span:nth-child(7) { width: 175px; }
.hint { font: 18.670px/24px "Liberation Sans", sans-serif; letter-spacing: -.05px; color: #d3d3d3; padding: 14px 0 0 21px; white-space: nowrap; }
.hint p { letter-spacing: .13px; }

/* taskbar */
.taskbar { position: absolute; left: 0; top: 984px; width: 1280px; height: 40px; display: flex; background: linear-gradient(90deg, #03141c 0, #05161e 114px, transparent 114px), rgba(0,0,0,.85); }
.t { width: 49px; display: flex; align-items: center; justify-content: center; flex: none; }
.t.s { width: 48px; } .t.s:nth-child(3) { width: 49px; }
.run { background: linear-gradient(#b5e8fb, #b5e8fb) center bottom / 40px 2px no-repeat; }
.on { background: linear-gradient(#b5e8fb, #b5e8fb) center bottom / 48px 2px no-repeat, linear-gradient(#505050, #505050) center / 48px 40px no-repeat; }
.tray { margin-left: auto; display: flex; align-items: center; color: #fff; width: 235px; }
.tray svg { margin-right: -41px; width: 138px; }
.ime { font-size: 13px; width: 28px; margin-left: -1px; }
.bopo { color: #222; font-size: 12px; font-weight: 600; width: 16px; }
.clock { width: 80px; margin-left: 9px; text-align: center; font-size: 12.400px; line-height: 17px; white-space: nowrap; }
.tray i { width: 1px; height: 40px; background: #666; }
.cursor { position: absolute; left: 663px; top: 774px; }
```
